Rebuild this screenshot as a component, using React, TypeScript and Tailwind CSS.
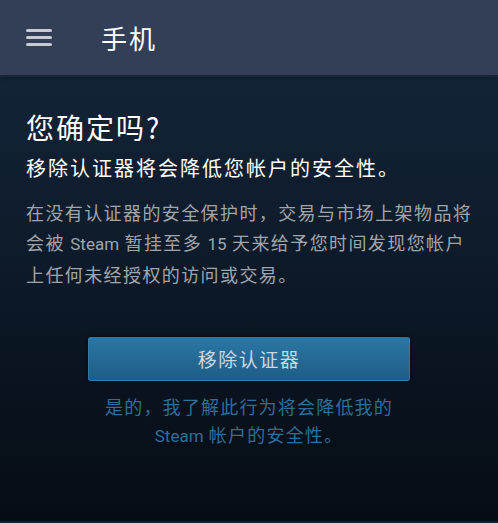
import React from 'react';

const font = { fontFamily: '"Noto Sans CJK SC", Roboto, "Noto Sans", sans-serif' };

// Latin runs inside CJK text are set a bit smaller and without the extra tracking
const Latin: React.FC<{ children: React.ReactNode }> = ({ children }) => (
    <span className="text-[17px] tracking-normal" style={{ fontFamily: 'Roboto, sans-serif' }}>{children}</span>
);

export default function App() {
    return (
        <div style={font} className="w-[498px] h-[523px] flex flex-col bg-gradient-to-b from-[#16283d] via-[#0d1a29] to-[#060c14] overflow-hidden">
            <div className="h-[77px] shrink-0 flex items-center bg-[#323f56] border-b-2 border-[#1b2638] shadow-md">
                <div className="ml-[26px] w-[26px] flex flex-col gap-[4px]">
                    <div className="h-[3px] bg-[#c7cbd2] rounded-sm" />
                    <div className="h-[3px] bg-[#c7cbd2] rounded-sm" />
                    <div className="h-[3px] bg-[#c7cbd2] rounded-sm" />
                </div>
                <h1 className="ml-[49px] text-[26px] text-white tracking-[2px]">手机</h1>
            </div>

            <div className="flex-1 flex flex-col px-[26px] pt-[32px]">
                <h2 className="text-[28px] leading-[36px] text-white tracking-[2px]">您确定吗?</h2>
                <p className="mt-[9px] text-[20px] leading-[28px] text-white tracking-[2px]">移除认证器将会降低您帐户的安全性。</p>
                <p className="mt-[15px] text-[18px] leading-[30px] text-[#a0a5ab] tracking-[1.4px] whitespace-nowrap">
                    在没有认证器的安全保护时，交易与市场上架物品将<br />
                    会被 <Latin>Steam</Latin> 暂挂至多 <Latin>15</Latin> 天来给予您时间发现您帐户<br />
                    上任何未经授权的访问或交易。
                </p>

                <div className="mt-[48px] flex justify-center">
                    <button className="w-[322px] h-[44px] rounded-[3px] bg-gradient-to-b from-[#2b77a6] to-[#1e5d85] border border-[#3a86b5]/60 shadow-[0_0_4px_rgba(0,0,0,0.6)] text-[19px] text-[#c9d7e2] tracking-[1.5px]">
                        移除认证器
                    </button>
                </div>
                <p className="mt-[11px] text-center text-[18px] leading-[28px] text-[#2e6e98] tracking-[1.2px] whitespace-nowrap">
                    是的，我了解此行为将会降低我的<br /><Latin>Steam</Latin> 帐户的安全性。
                </p>
            </div>
            <div className="h-[2px] bg-[#0f2233]" />
        </div>
    );
}
